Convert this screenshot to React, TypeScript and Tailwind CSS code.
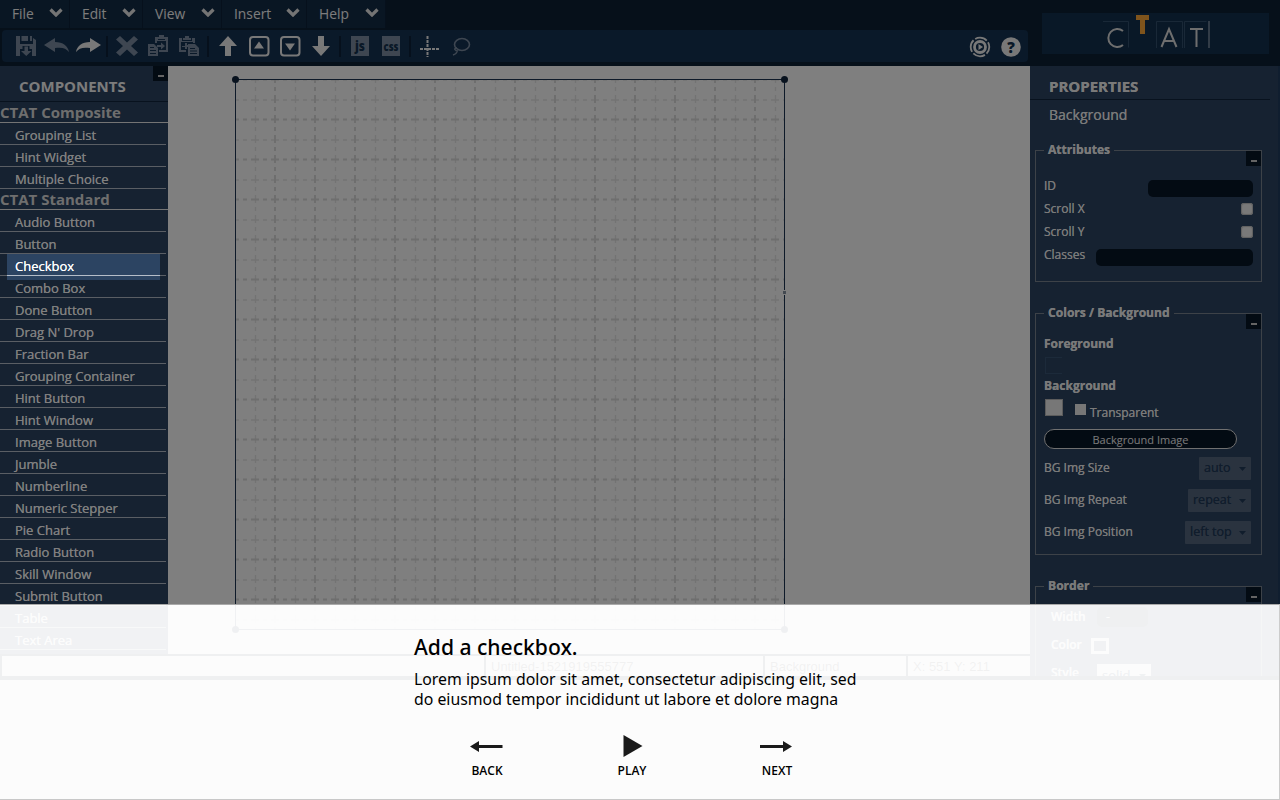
import React from "react";

const menus = [
  { label: "File", width: "w-[70px]" },
  { label: "Edit", width: "w-[73px]" },
  { label: "View", width: "w-[79px]" },
  { label: "Insert", width: "w-[85px]" },
  { label: "Help", width: "w-[79px]" },
];

const composite = ["Grouping List", "Hint Widget", "Multiple Choice"];
const standard = [
  "Audio Button", "Button", "Checkbox", "Combo Box", "Done Button", "Drag N' Drop",
  "Fraction Bar", "Grouping Container", "Hint Button", "Hint Window", "Image Button",
  "Jumble", "Numberline", "Numeric Stepper", "Pie Chart", "Radio Button",
  "Skill Window", "Submit Button", "Table", "Text Area",
];

function Tool({ children, dim }: { children: React.ReactNode; dim?: boolean }) {
  return (
    <button className={`flex h-8 w-[31px] shrink-0 items-center justify-center ${dim ? "text-[#7c8da2]" : "text-[#f0f0f0]"}`}>
      <svg width="26" height="24" viewBox="0 0 26 24" fill="currentColor">{children}</svg>
    </button>
  );
}

function Separator() {
  return <div className="mx-[3px] h-[21px] w-[2px] shrink-0 bg-[#0c2138]" />;
}

function Clipboard({ flip }: { flip?: boolean }) {
  return flip ? (
    <g>
      <path d="M3 4h3v3h10V4h3v5h-2V8H5v8h5v2H3z" />
      <path d="M7 6V4h2V2h4v2h2v2zM6 12h3v-3h2v2h3v2h-3v2H9v-2H6z" />
      <path d="M12 10h7l4 4v8H12zM14 14v1h5v-1zm0 2.500v1h7v-1zm0 2.500v1h7v-1z" fillRule="evenodd" />
    </g>
  ) : (
    <g>
      <path d="M10 3h3v3h7V3h3v15h-9v-2h7V7h-9v2h-2z" />
      <path d="M13 5V3h1V1h5v2h1v2zM12 11h4V8.500l4 3.500-4 3.500V13h-4z" />
      <path d="M3 10h6l4 4v8H3zM5 13v1h4v-1zm0 3v1h6v-1zm0 3v1h6v-1z" fillRule="evenodd" />
    </g>
  );
}

function Toolbar() {
  return (
    <div className="ml-[2px] flex h-8 w-[1026px] items-center rounded-sm bg-[#143252] pl-[8px]">
      <Tool dim>
        <path d="M3 2h4v8h13V4l3 2v16h-4v-7h-2.500v-3h-7v3H7v7H3zM8.500 2H15v5H8.500zM17 2h2v5h-2z" fillRule="evenodd" />
        <path d="M11.500 12.500h3.500V17h3.500l-5.250 5L8 17h3.500z" />
      </Tool>
      <Tool dim><path d="M0 11L11 4v4c8 0 13 4 14 10-3-4-7-5-14-4v4z" /></Tool>
      <Tool><path d="M26 11L15 4v4C7 8 2 12 1 18c3-4 7-5 14-4v4z" /></Tool>
      <Separator />
      <Tool dim><path d="M6 2l7 6.500L20 2l4 3.500-7 6.500 7 6.500-4 3.500-7-6.500L6 22l-4-3.500L9 12 2 5.500z" /></Tool>
      <Tool dim><Clipboard /></Tool>
      <Tool dim><Clipboard flip /></Tool>
      <Separator />
      <Tool><path d="M13 2l9 10h-6v10h-6V12H4z" /></Tool>
      <Tool><rect x="4" y="3" width="18.500" height="18.500" rx="3" fill="none" stroke="currentColor" strokeWidth="2" /><path d="M13 7.500l5 7H8z" /></Tool>
      <Tool><rect x="4" y="3" width="18.500" height="18.500" rx="3" fill="none" stroke="currentColor" strokeWidth="2" /><path d="M13 16.500l5-7H8z" /></Tool>
      <Tool><path d="M13 22l9-10h-6V2h-6v10H4z" /></Tool>
      <Separator />
      <Tool dim>
        <rect x="4" y="2" width="18" height="20" />
        <text x="13" y="17" textAnchor="middle" fontFamily="Open Sans, sans-serif" fontWeight="800" fontSize="14" textLength="10" lengthAdjust="spacingAndGlyphs" fill="#12304e">js</text>
      </Tool>
      <Tool dim>
        <rect x="4" y="2" width="18" height="20" />
        <text x="13" y="17" textAnchor="middle" fontFamily="Open Sans, sans-serif" fontWeight="800" fontSize="13" textLength="15" lengthAdjust="spacingAndGlyphs" fill="#12304e">css</text>
      </Tool>
      <Separator />
      <Tool><path d="M10.500 2v21M3 15h20" fill="none" stroke="currentColor" strokeWidth="2" strokeDasharray="3 1" /></Tool>
      <Tool dim>
        <ellipse cx="14" cy="10.500" rx="7.500" ry="6" fill="none" stroke="currentColor" strokeWidth="1.600" />
        <path d="M9 14c-4 0-2 3 1 3M9 17c0 2-1 3-4 4" fill="none" stroke="currentColor" strokeWidth="1.500" />
      </Tool>
      <div className="mr-[2px] ml-auto flex">
        <Tool>
          <circle cx="13" cy="13" r="9.300" fill="none" stroke="currentColor" strokeWidth="1.800" strokeDasharray="12.600 2" strokeDashoffset="5.300" />
          <circle cx="13" cy="13" r="5.500" fill="none" stroke="currentColor" strokeWidth="2.800" />
          <path d="M11.500 10l4.500 3-4.500 3z" />
        </Tool>
        <Tool>
          <circle cx="13" cy="13" r="9.800" />
          <text x="13" y="18.500" textAnchor="middle" fontFamily="Open Sans, sans-serif" fontWeight="800" fontSize="15" fill="#12304e">?</text>
        </Tool>
      </div>
    </div>
  );
}

function Logo() {
  return (
    <div className="mt-[13px] mr-[11px] h-[41px] w-[227px] bg-[#12304e]">
      <svg width="227" height="41" className="overflow-visible">
        <g fill="none" stroke="#33506f" strokeWidth="1">
          <path d="M61 8.500h25.500v26M114.500 35V8.500h26V35M142.500 35V8.500h22" />
        </g>
        <path d="M167 8v27" stroke="#8090a4" strokeWidth="1.500" />
        <g fill="none" stroke="#dddddd" strokeWidth="2">
          <path d="M81 18a9 9 0 1 0 0 14M119.500 34l7.500-18 7.500 18M122 28h10.500M148 16h13M154.500 16v18" />
        </g>
        <path d="M94 2h13v5h-4v14h-5V7h-4z" fill="#ffa838" />
      </svg>
    </div>
  );
}

function Collapse({ place }: { place: string }) {
  return (
    <button className={`absolute right-0 flex h-[15px] w-[15px] items-end justify-center bg-[#071626] pb-[4px] ${place}`}>
      <span className="h-[2px] w-[6px] bg-[#c8c8c8]" />
    </button>
  );
}

function Category({ name, items }: { name: string; items: string[] }) {
  return (
    <section>
      <h3 className="h-[21px] w-[168px] border-b border-[#e8e8e8] text-[15px] leading-[21px] font-bold text-[#dddddd]">{name}</h3>
      <ul>
        {items.map((item) => (
          <li key={item} className="h-[22px] w-[166px] border-b border-[#b5bdc8] pl-[15px] text-[13px] leading-[24px] text-white [text-shadow:0_0_0.5px_#fff]">{item}</li>
        ))}
      </ul>
    </section>
  );
}

function Handle({ place }: { place: string }) {
  return <span className={`absolute h-[7px] w-[7px] rounded-full bg-[#10243c] ${place}`} />;
}

function Canvas() {
  return (
    <main className="h-[588px] w-[862px] bg-white pt-[13px] pl-[67px]">
      <div className="relative h-[551px] w-[550px] border border-[#1c3553]">
        <svg width="548" height="549" className="block">
          <defs>
            <pattern id="grid" x="-1" y="-1" width="40" height="40" patternUnits="userSpaceOnUse">
              <g fill="none">
                <path d="M20.500 -4V44M-4 21H44" stroke="#e6e6e6" strokeWidth="1.400" strokeDasharray="8 4 4 4" />
                <path d="M0 -4V44M40 -4V44M-4 0.500H44M-4 40.500H44" stroke="#dcdcdc" strokeWidth="2" strokeDasharray="8 4 4 4" />
              </g>
            </pattern>
          </defs>
          <rect width="548" height="549" fill="url(#grid)" />
        </svg>
        <Handle place="-top-1 -left-1" />
        <Handle place="-top-1 -right-1" />
        <Handle place="-bottom-1 -left-1" />
        <Handle place="-right-1 -bottom-1" />
        <span className="absolute top-[210px] -right-[2px] h-[5px] w-[3px] border-y border-white bg-[#8894a3]" />
      </div>
    </main>
  );
}

function Group({ title, height, children }: { title: string; height: string; children: React.ReactNode }) {
  return (
    <fieldset className={`relative w-[227px] border border-[#7b8590] pr-[8px] pl-[8px] ${height}`}>
      <legend className="ml-0 h-[18px] px-[4px] text-[12.1px] leading-[18px] font-bold">{title}</legend>
      <Collapse place="-top-[8px]" />
      {children}
    </fieldset>
  );
}

function Picker({ label, value, width }: { label: string; value: string; width: string }) {
  return (
    <div className="flex h-[32px] items-start justify-between pr-[2px]">
      <span className="leading-[22px]">{label}</span>
      <span className={`flex h-[23px] items-center justify-between rounded-[1px] bg-[#55677f] pr-[5px] pl-[5px] text-[12.5px] text-[#213a59] ${width}`}>
        {value}
        <svg width="7" height="4"><path d="M0 0h7L3.500 4z" fill="#213a59" /></svg>
      </span>
    </div>
  );
}

function Properties() {
  return (
    <aside className="h-[610px] w-[250px] overflow-hidden border-r-2 border-[#203d5f] bg-[#2c4462] text-[12px] whitespace-nowrap text-[#f4f4f4] [text-shadow:0_0_0.5px_currentColor]">
      <h2 className="h-[34px] w-[240px] border-b border-[#10253d] pl-[19px] text-[15px] leading-[40px] font-bold">PROPERTIES</h2>
      <p className="h-[41px] pl-[19px] text-[14px] leading-[30px]">Background</p>
      <div className="pl-[5px]">
        <Group title="Attributes" height="h-[141px]">
          <div className="mt-[15px] flex h-[23px] justify-between">
            <span className="leading-[23px]">ID</span>
            <span className="mt-[6px] h-[17px] w-[105px] rounded-[5px] bg-[#071626]" />
          </div>
          {["Scroll X", "Scroll Y"].map((name) => (
            <div key={name} className="flex h-[23px] items-center justify-between">
              <span>{name}</span>
              <span className="h-[12px] w-[12px] rounded-[3px] bg-[#f3f3f3] shadow-[inset_0_0_1px_1px_#c0c0c0]" />
            </div>
          ))}
          <div className="flex h-[23px] justify-between">
            <span className="leading-[23px]">Classes</span>
            <span className="mt-[6px] h-[17px] w-[157px] rounded-[5px] bg-[#071626]" />
          </div>
        </Group>
        <div className="h-[22px]" />
        <Group title="Colors / Background" height="h-[251px]">
          <p className="mt-[12px] h-[20px] leading-[20px] font-bold">Foreground</p>
          <div className="mt-[3px] ml-[1px] h-[17px] w-[17px] border border-r-0 border-[#385474]" />
          <p className="mt-[2px] h-[20px] leading-[20px] font-bold">Background</p>
          <div className="mt-[3px] ml-[1px] flex h-[24px]">
            <span className="h-[17px] w-[18px] border border-[#b8b8b8] bg-[#eeeeee]" />
            <span className="mt-[5px] ml-[12px] h-[11px] w-[11px] bg-[#eeeeee]" />
            <span className="ml-[4px] leading-[28px]">Transparent</span>
          </div>
          <button className="mt-[6px] flex h-[20px] w-[193px] items-center justify-center rounded-full border border-[#e0e0e0] bg-[#071626] pt-[2px] text-[11px]">Background Image</button>
          <div className="mt-[8px]">
            <Picker label="BG Img Size" value="auto" width="w-[52px]" />
            <Picker label="BG Img Repeat" value="repeat" width="w-[63px]" />
            <Picker label="BG Img Position" value="left top" width="w-[66px]" />
          </div>
        </Group>
        <div className="h-[22px]" />
        <Group title="Border" height="h-[141px]">
          <div className="mt-[12px] ml-[7px] flex h-[28px]">
            <span className="w-[46px] leading-[20px] font-semibold">Width</span>
            <span className="h-[20px] w-[51px] rounded-[5px] bg-[#071626] pl-[9px] leading-[20px]">-</span>
          </div>
          <div className="ml-[7px] flex h-[28px]">
            <span className="w-[40px] leading-[20px] font-semibold">Color</span>
            <span className="mt-[3px] h-[16px] w-[18px] border-3 border-white bg-[#2c4462]" />
          </div>
          <div className="ml-[7px] flex h-[28px]">
            <span className="w-[46px] leading-[20px] font-semibold">Style</span>
            <span className="mt-[1px] flex h-[23px] w-[54px] items-center justify-between bg-white px-[5px] text-[13px] text-[#213a59]">solid<svg width="7" height="4"><path d="M0 0h7L3.500 4z" fill="#213a59" /></svg></span>
          </div>
        </Group>
      </div>
    </aside>
  );
}

function Editor() {
  return (
    <div className="h-[680px] overflow-hidden bg-[#0b2034]">
      <header className="flex h-[66px] justify-between bg-[#0c2034]">
        <div>
          <nav className="flex h-[30px]">
            {menus.map((m) => (
              <div key={m.label} className={`flex h-[28px] items-center justify-between border-r border-[#0c2138] bg-[#132c46] pr-[6px] pl-[12px] text-[13.8px] text-[#f8f8f8] ${m.width}`}>
                <span>{m.label}</span>
                <svg width="14" height="9" viewBox="0 0 14 9" className="mb-[4px]"><path d="M1.500 1.500L7 7l5.500-5.500" fill="none" stroke="#e8e8e8" strokeWidth="3.200" /></svg>
              </div>
            ))}
          </nav>
          <Toolbar />
        </div>
        <Logo />
      </header>
      <div className="flex h-[610px]">
        <div>
          <div className="flex h-[588px]">
            <aside className="relative h-[588px] w-[168px] overflow-hidden bg-[#2c4462] whitespace-nowrap">
              <h2 className="h-[36px] border-b border-[#10253d] pl-[19px] text-[15px] leading-[41px] font-bold text-[#f8f8f8]">COMPONENTS</h2>
              <Collapse place="top-0" />
              <Category name="CTAT Composite" items={composite} />
              <Category name="CTAT Standard" items={standard} />
            </aside>
            <Canvas />
          </div>
          <div className="flex h-[22px] w-[1030px] gap-[2px] border-t-2 border-[#0b2034] bg-[#0b2034] pl-[2px] font-['Liberation_Sans',sans-serif] text-[13px] leading-[22px] text-[#333333]">
            <span className="w-[482px] bg-white" />
            <span className="w-[277px] bg-white pl-[5px]">Untitled-1521919555777</span>
            <span className="w-[141px] bg-white pl-[5px]">Background</span>
            <span className="flex-1 bg-white pl-[5px]">X: 551 Y: 211</span>
          </div>
        </div>
        <Properties />
      </div>
    </div>
  );
}

function Step({ label, children }: { label: string; children: React.ReactNode }) {
  return (
    <button className="flex w-[40px] flex-col items-center text-[12px] leading-[16px] font-semibold text-black">
      <svg width="34" height="24" viewBox="0 0 34 24" fill="#1a1a1a">{children}</svg>
      <span className="mt-[5px]">{label}</span>
    </button>
  );
}

export default function App() {
  return (
    <div className="relative h-[800px] w-[1280px] overflow-hidden bg-white font-['Open_Sans',sans-serif]">
      <Editor />
      <div className="absolute inset-x-0 top-0 h-[604px] overflow-hidden">
        <div className="absolute top-[254px] left-[7px] h-[26px] w-[153px] shadow-[0_0_0_1400px_rgba(0,0,0,0.5)]" />
      </div>
      <section className="absolute inset-x-0 top-[604px] h-[196px] border-t border-r border-b border-t-[#aaaaaa] border-r-[#cccccc] border-b-[#c8c8c8] bg-[#fcfcfc]/95 pt-[29px] pl-[414px] font-['Noto_Sans',sans-serif] text-black">
        <h1 className="h-[27px] text-[21.1px] leading-[26px] font-medium whitespace-nowrap">Add a checkbox.</h1>
        <p className="mt-[8px] w-[460px] text-[15.84px] leading-[20px]">Lorem ipsum dolor sit amet, consectetur adipiscing elit, sed<br />do eiusmod tempor incididunt ut labore et dolore magna</p>
        <div className="mt-[25px] ml-[53px] flex w-[330px] justify-between font-['Open_Sans',sans-serif]">
          <Step label="BACK"><path d="M0 12.500L9 7v4h23.500v3H9v4z" /></Step>
          <Step label="PLAY"><path d="M8.500 1l19 11-19 11z" /></Step>
          <Step label="NEXT"><path d="M32 12.500L23 7v4H0v3h23v4z" /></Step>
        </div>
      </section>
    </div>
  );
}
